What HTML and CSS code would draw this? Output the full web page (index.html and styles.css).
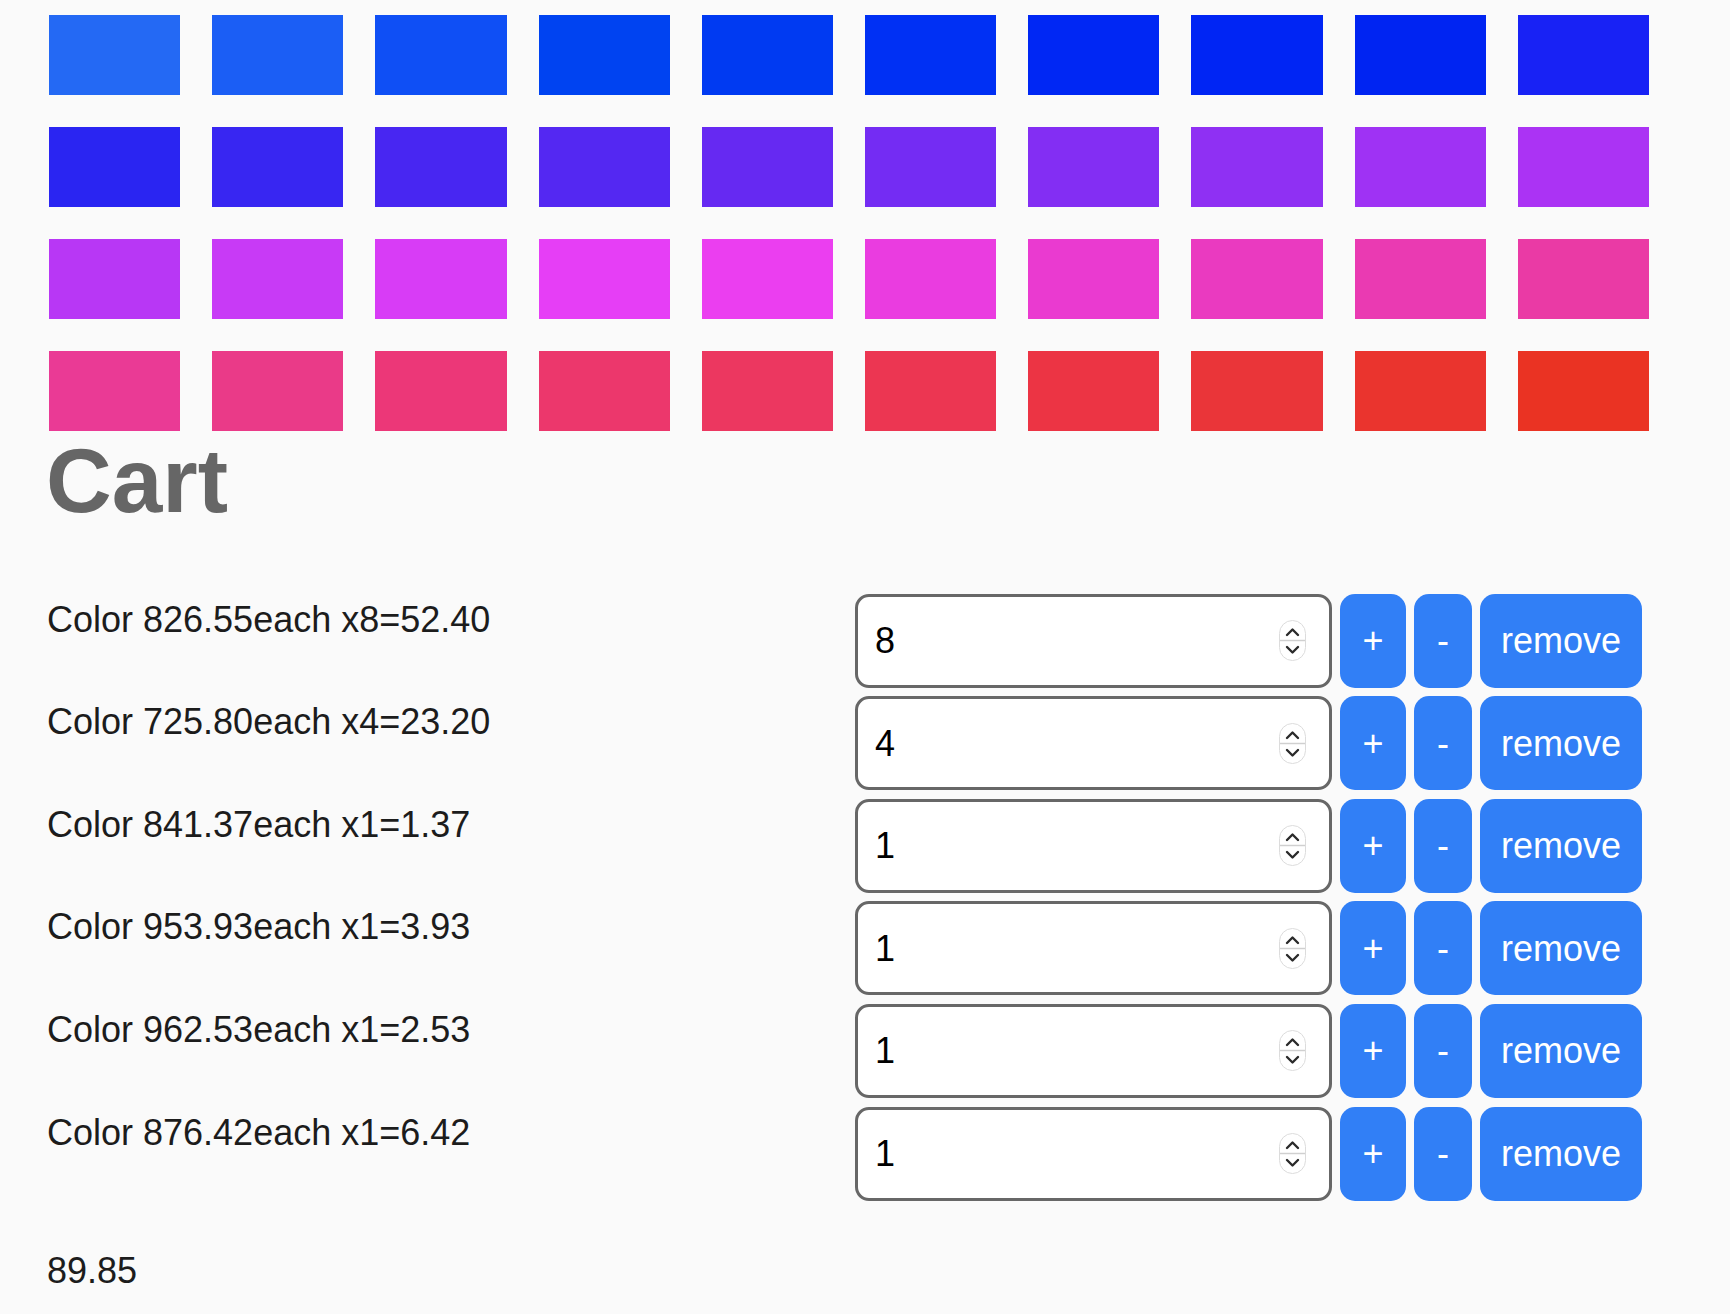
FILE: index.html
```html
<!DOCTYPE html>
<html lang="en">
<head>
<meta charset="utf-8">
<title>Cart</title>
<link rel="stylesheet" href="styles.css">
</head>
<body>
<main class="page">
  <section class="swatches">
    <div class="swatch" style="background:#2469f4"></div>
    <div class="swatch" style="background:#1b5ef5"></div>
    <div class="swatch" style="background:#0f4ff5"></div>
    <div class="swatch" style="background:#0043f1"></div>
    <div class="swatch" style="background:#003af2"></div>
    <div class="swatch" style="background:#0030f4"></div>
    <div class="swatch" style="background:#0027f4"></div>
    <div class="swatch" style="background:#0025f4"></div>
    <div class="swatch" style="background:#0024f2"></div>
    <div class="swatch" style="background:#1822f5"></div>

    <div class="swatch" style="background:#2a25f2"></div>
    <div class="swatch" style="background:#3826f2"></div>
    <div class="swatch" style="background:#4826f2"></div>
    <div class="swatch" style="background:#5428f2"></div>
    <div class="swatch" style="background:#6629f2"></div>
    <div class="swatch" style="background:#742cf3"></div>
    <div class="swatch" style="background:#832ef3"></div>
    <div class="swatch" style="background:#8f30f3"></div>
    <div class="swatch" style="background:#9f32f4"></div>
    <div class="swatch" style="background:#ab33f4"></div>

    <div class="swatch" style="background:#b837f5"></div>
    <div class="swatch" style="background:#c83af6"></div>
    <div class="swatch" style="background:#d83cf6"></div>
    <div class="swatch" style="background:#e63ef6"></div>
    <div class="swatch" style="background:#eb3ef0"></div>
    <div class="swatch" style="background:#ea3ce0"></div>
    <div class="swatch" style="background:#ea3ad0"></div>
    <div class="swatch" style="background:#ea3ac0"></div>
    <div class="swatch" style="background:#ea3ab2"></div>
    <div class="swatch" style="background:#ea3aa5"></div>

    <div class="swatch" style="background:#ea3a95"></div>
    <div class="swatch" style="background:#ea3a88"></div>
    <div class="swatch" style="background:#ec3778"></div>
    <div class="swatch" style="background:#ec376c"></div>
    <div class="swatch" style="background:#ec3760"></div>
    <div class="swatch" style="background:#ec3652"></div>
    <div class="swatch" style="background:#ec3444"></div>
    <div class="swatch" style="background:#ea3539"></div>
    <div class="swatch" style="background:#ea342e"></div>
    <div class="swatch" style="background:#ea3323"></div>
  </section>

  <h1 class="title">Cart</h1>

  <section class="cart">
    <div class="row">
      <p class="label">Color 826.55each x8=52.40</p>
      <div class="controls">
        <label class="qty">
          <input class="qty-input" type="text" value="8">
          <svg class="spin" width="27" height="41" viewBox="0 0 27 41" aria-hidden="true"><rect x="0.5" y="0.5" width="26" height="40" rx="13" fill="#fff" stroke="#dcdcdc"/><line x1="1" y1="20.5" x2="26" y2="20.5" stroke="#d0d0d0" stroke-width="1.5"/><polyline points="8,15 13.5,9.5 19,15" fill="none" stroke="#2a2a2a" stroke-width="2.4" stroke-linecap="round" stroke-linejoin="round"/><polyline points="8,27 13.5,32.5 19,27" fill="none" stroke="#2a2a2a" stroke-width="2.4" stroke-linecap="round" stroke-linejoin="round"/></svg>
        </label>
        <button class="btn btn-plus">+</button>
        <button class="btn btn-minus">-</button>
        <button class="btn btn-remove">remove</button>
      </div>
    </div>

    <div class="row">
      <p class="label">Color 725.80each x4=23.20</p>
      <div class="controls">
        <label class="qty">
          <input class="qty-input" type="text" value="4">
          <svg class="spin" width="27" height="41" viewBox="0 0 27 41" aria-hidden="true"><rect x="0.5" y="0.5" width="26" height="40" rx="13" fill="#fff" stroke="#dcdcdc"/><line x1="1" y1="20.5" x2="26" y2="20.5" stroke="#d0d0d0" stroke-width="1.5"/><polyline points="8,15 13.5,9.5 19,15" fill="none" stroke="#2a2a2a" stroke-width="2.4" stroke-linecap="round" stroke-linejoin="round"/><polyline points="8,27 13.5,32.5 19,27" fill="none" stroke="#2a2a2a" stroke-width="2.4" stroke-linecap="round" stroke-linejoin="round"/></svg>
        </label>
        <button class="btn btn-plus">+</button>
        <button class="btn btn-minus">-</button>
        <button class="btn btn-remove">remove</button>
      </div>
    </div>

    <div class="row">
      <p class="label">Color 841.37each x1=1.37</p>
      <div class="controls">
        <label class="qty">
          <input class="qty-input" type="text" value="1">
          <svg class="spin" width="27" height="41" viewBox="0 0 27 41" aria-hidden="true"><rect x="0.5" y="0.5" width="26" height="40" rx="13" fill="#fff" stroke="#dcdcdc"/><line x1="1" y1="20.5" x2="26" y2="20.5" stroke="#d0d0d0" stroke-width="1.5"/><polyline points="8,15 13.5,9.5 19,15" fill="none" stroke="#2a2a2a" stroke-width="2.4" stroke-linecap="round" stroke-linejoin="round"/><polyline points="8,27 13.5,32.5 19,27" fill="none" stroke="#2a2a2a" stroke-width="2.4" stroke-linecap="round" stroke-linejoin="round"/></svg>
        </label>
        <button class="btn btn-plus">+</button>
        <button class="btn btn-minus">-</button>
        <button class="btn btn-remove">remove</button>
      </div>
    </div>

    <div class="row">
      <p class="label">Color 953.93each x1=3.93</p>
      <div class="controls">
        <label class="qty">
          <input class="qty-input" type="text" value="1">
          <svg class="spin" width="27" height="41" viewBox="0 0 27 41" aria-hidden="true"><rect x="0.5" y="0.5" width="26" height="40" rx="13" fill="#fff" stroke="#dcdcdc"/><line x1="1" y1="20.5" x2="26" y2="20.5" stroke="#d0d0d0" stroke-width="1.5"/><polyline points="8,15 13.5,9.5 19,15" fill="none" stroke="#2a2a2a" stroke-width="2.4" stroke-linecap="round" stroke-linejoin="round"/><polyline points="8,27 13.5,32.5 19,27" fill="none" stroke="#2a2a2a" stroke-width="2.4" stroke-linecap="round" stroke-linejoin="round"/></svg>
        </label>
        <button class="btn btn-plus">+</button>
        <button class="btn btn-minus">-</button>
        <button class="btn btn-remove">remove</button>
      </div>
    </div>

    <div class="row">
      <p class="label">Color 962.53each x1=2.53</p>
      <div class="controls">
        <label class="qty">
          <input class="qty-input" type="text" value="1">
          <svg class="spin" width="27" height="41" viewBox="0 0 27 41" aria-hidden="true"><rect x="0.5" y="0.5" width="26" height="40" rx="13" fill="#fff" stroke="#dcdcdc"/><line x1="1" y1="20.5" x2="26" y2="20.5" stroke="#d0d0d0" stroke-width="1.5"/><polyline points="8,15 13.5,9.5 19,15" fill="none" stroke="#2a2a2a" stroke-width="2.4" stroke-linecap="round" stroke-linejoin="round"/><polyline points="8,27 13.5,32.5 19,27" fill="none" stroke="#2a2a2a" stroke-width="2.4" stroke-linecap="round" stroke-linejoin="round"/></svg>
        </label>
        <button class="btn btn-plus">+</button>
        <button class="btn btn-minus">-</button>
        <button class="btn btn-remove">remove</button>
      </div>
    </div>

    <div class="row">
      <p class="label">Color 876.42each x1=6.42</p>
      <div class="controls">
        <label class="qty">
          <input class="qty-input" type="text" value="1">
          <svg class="spin" width="27" height="41" viewBox="0 0 27 41" aria-hidden="true"><rect x="0.5" y="0.5" width="26" height="40" rx="13" fill="#fff" stroke="#dcdcdc"/><line x1="1" y1="20.5" x2="26" y2="20.5" stroke="#d0d0d0" stroke-width="1.5"/><polyline points="8,15 13.5,9.5 19,15" fill="none" stroke="#2a2a2a" stroke-width="2.4" stroke-linecap="round" stroke-linejoin="round"/><polyline points="8,27 13.5,32.5 19,27" fill="none" stroke="#2a2a2a" stroke-width="2.4" stroke-linecap="round" stroke-linejoin="round"/></svg>
        </label>
        <button class="btn btn-plus">+</button>
        <button class="btn btn-minus">-</button>
        <button class="btn btn-remove">remove</button>
      </div>
    </div>
  </section>

  <p class="total">89.85</p>
</main>
</body>
</html>
```

FILE: styles.css
```css
* {
  box-sizing: border-box;
}

html, body {
  margin: 0;
  padding: 0;
  background: #fafafa;
}

body {
  font-family: "Liberation Sans", Arial, Helvetica, sans-serif;
  color: #1c1c1c;
}

.page {
  padding: 15px 0 0 49px;
}

.swatches {
  display: grid;
  grid-template-columns: repeat(10, 131.2px);
  grid-auto-rows: 80px;
  column-gap: 32px;
  row-gap: 32px;
}

.swatch {
  width: 100%;
  height: 80px;
}

.title {
  margin: 0 0 0 -3px;
  font-size: 91px;
  line-height: 100px;
  font-weight: 700;
  color: #666666;
}

.cart {
  display: flex;
  flex-direction: column;
  gap: 8.6px;
  margin-top: 62.6px;
}

.row {
  display: grid;
  grid-template-columns: 806px auto;
  height: 94px;
}

.label {
  margin: 0 0 0 -2px;
  padding-top: 5px;
  font-size: 36px;
  line-height: 41px;
  white-space: nowrap;
}

.controls {
  display: flex;
  gap: 8px;
  height: 94px;
}

.qty {
  width: 477px;
  height: 94px;
  display: flex;
  align-items: center;
  background: #ffffff;
  border: 3px solid #676767;
  border-radius: 14px;
  padding: 0 23px 0 17px;
}

.qty-input {
  flex: 1;
  min-width: 0;
  border: none;
  outline: none;
  background: transparent;
  padding: 0;
  margin: 0;
  font-family: "Liberation Sans", Arial, Helvetica, sans-serif;
  font-size: 36px;
  line-height: 41px;
  color: #000000;
}

.spin {
  flex: none;
  display: block;
}

.btn {
  height: 94px;
  border: none;
  border-radius: 15px;
  background: #317ff6;
  color: #ffffff;
  font-family: "Liberation Sans", Arial, Helvetica, sans-serif;
  font-size: 36px;
  line-height: 41px;
  padding: 0;
  margin: 0;
  cursor: pointer;
}

.btn-plus {
  width: 66px;
}

.btn-minus {
  width: 58px;
}

.btn-remove {
  width: 162px;
}

.total {
  margin: 49px 0 0 -2px;
  font-size: 36px;
  line-height: 41px;
}
```
